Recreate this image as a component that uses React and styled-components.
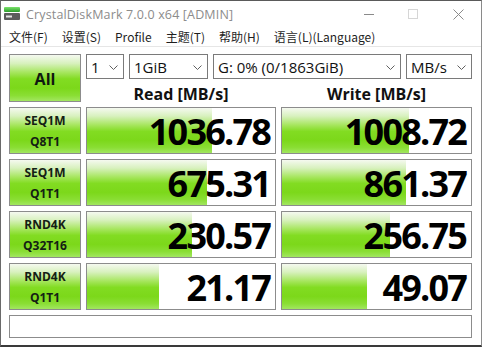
import React from 'react'
import styled, { createGlobalStyle } from 'styled-components'

// CrystalDiskMark main window

const GlobalStyle = createGlobalStyle`
    html, body {
        margin: 0;
        padding: 0;
        background: #3a3a3a;
    }
    * {
        box-sizing: border-box;
    }
`

const menuItems = ['文件(F)', '设置(S)', 'Profile', '主题(T)', '帮助(H)', '语言(L)(Language)']

const results = [
    { top: 'SEQ1M', bottom: 'Q8T1', read: '1036.78', readBar: 125, write: '1008.72', writeBar: 127 },
    { top: 'SEQ1M', bottom: 'Q1T1', read: '675.31', readBar: 120, write: '861.37', writeBar: 124 },
    { top: 'RND4K', bottom: 'Q32T16', read: '230.57', readBar: 105, write: '256.75', writeBar: 108 },
    { top: 'RND4K', bottom: 'Q1T1', read: '21.17', readBar: 72, write: '49.07', writeBar: 85 },
]

function Chevron() {
    return (
        <svg width="9" height="5" viewBox="0 0 9 5">
            <polyline points="0.5,0.5 4.5,4.5 8.5,0.5" fill="none" stroke="#606060" strokeWidth="1" />
        </svg>
    )
}

function AppIcon() {
    return (
        <IconBox width="16" height="13" viewBox="0 0 16 13">
            <defs>
                <linearGradient id="ig" x1="0" y1="0" x2="0" y2="1">
                    <stop offset="0" stopColor="#7be36b" />
                    <stop offset="1" stopColor="#2c9c2c" />
                </linearGradient>
            </defs>
            <rect x="0" y="0" width="16" height="5" rx="1" fill="url(#ig)" />
            <rect x="0" y="6" width="16" height="7" rx="1" fill="#5c5c5c" />
            <rect x="2" y="8.5" width="6" height="2" fill="#e6e6e6" />
        </IconBox>
    )
}

function Select({ width, children }) {
    return (
        <SelectBox $width={width}>
            <span>{children}</span>
            <Chevron />
        </SelectBox>
    )
}

function App() {
    return (
        <>
            <GlobalStyle />
            <Window>
                <TitleBar>
                    <AppIcon />
                    <Title>CrystalDiskMark 7.0.0 x64 [ADMIN]</Title>
                    <Controls>
                        <Minimize />
                        <Maximize />
                        <Close>
                            <svg width="11" height="11" viewBox="0 0 11 11">
                                <path d="M0.5 0.5 L10.5 10.5 M10.5 0.5 L0.5 10.5" stroke="#8a8a8a" strokeWidth="1" />
                            </svg>
                        </Close>
                    </Controls>
                </TitleBar>
                <MenuBar>
                    {menuItems.map(item => <MenuItem key={item}>{item}</MenuItem>)}
                </MenuBar>
                <Body>
                    <AllButton>All</AllButton>
                    <Selects>
                        <Select width={38}>1</Select>
                        <Select width={79}>1GiB</Select>
                        <Select width={188}>G: 0% (0/1863GiB)</Select>
                        <Select width={66}>MB/s</Select>
                    </Selects>
                    <Header>Read [MB/s]</Header>
                    <Header>Write [MB/s]</Header>
                    {results.map(r => (
                        <React.Fragment key={r.top + r.bottom}>
                            <TestLabel>
                                <span>{r.top}</span>
                                <span>{r.bottom}</span>
                            </TestLabel>
                            <ValueCell>
                                <Bar style={{ width: r.readBar }} />
                                <Value>{r.read}</Value>
                            </ValueCell>
                            <ValueCell>
                                <Bar style={{ width: r.writeBar }} />
                                <Value>{r.write}</Value>
                            </ValueCell>
                        </React.Fragment>
                    ))}
                    <Comment />
                </Body>
            </Window>
        </>
    )
}

export default App

const greenGradient = `linear-gradient(to bottom,
    #f5f9f0 0%,
    #d8f1be 18%,
    #a6e65e 38%,
    #82dc22 52%,
    #7cd81a 72%,
    #8ade34 88%,
    #a2e660 100%)`

const Window = styled.div`
    width: 482px;
    height: 347px;
    background: #ffffff;
    border-top: 1px solid #5a5a5a;
    border-left: 1px solid #6a6a6a;
    border-right: 1px solid #8a8a8a;
    border-bottom: 2px solid #3a3a3a;
    display: flex;
    flex-direction: column;
    font-family: "Open Sans", "Noto Sans", "Noto Sans CJK SC", sans-serif;
`

const TitleBar = styled.div`
    height: 26px;
    display: flex;
    align-items: center;
    padding-left: 3px;
`

const IconBox = styled.svg`
    flex: none;
    margin-top: -1px;
`

const Title = styled.div`
    margin-left: 6px;
    font-size: 12.5px;
    color: #8c8c8c;
    flex: 1;
    font-family: "Open Sans", "Noto Sans", sans-serif;
    letter-spacing: 0.15px;
`

const Controls = styled.div`
    display: flex;
    align-items: center;
    height: 100%;
`

const Minimize = styled.div`
    width: 10px;
    height: 1px;
    background: #8a8a8a;
    margin-right: 34px;
`

const Maximize = styled.div`
    width: 10px;
    height: 10px;
    border: 1px solid #d6d6d6;
    margin-right: 35px;
`

const Close = styled.div`
    width: 11px;
    height: 11px;
    margin-right: 17px;
    display: flex;
`

const MenuBar = styled.div`
    height: 19px;
    display: flex;
    align-items: center;
    padding-left: 1px;
    border-bottom: 1px solid #e6e6e6;
    box-sizing: content-box;
`

const MenuItem = styled.div`
    padding: 0 7px;
    font-size: 12px;
    line-height: 19px;
    color: #1e1e1e;
    font-family: "Noto Sans CJK SC", "Noto Sans", sans-serif;
`

const Body = styled.div`
    flex: 1;
    display: grid;
    grid-template-columns: 72px 190px 191px;
    grid-template-rows: 25px 18px repeat(4, 47px) 23px;
    gap: 5px;
    padding: 7px 9px 7px 8px;
`

const AllButton = styled.div`
    grid-row: span 2;
    border: 1px solid #8c8c8c;
    background: ${greenGradient};
    display: flex;
    align-items: center;
    justify-content: center;
    font-size: 16px;
    font-weight: 700;
    color: #101810;
    padding-top: 2px;
`

const Selects = styled.div`
    grid-column: span 2;
    display: flex;
    gap: 5px;
`

const SelectBox = styled.div`
    width: ${p => p.$width}px;
    height: 25px;
    border: 1px solid #7a7a7a;
    background: #fff;
    display: flex;
    align-items: center;
    justify-content: space-between;
    padding: 0 5px 0 4px;
    font-size: 15px;
    color: #111;
    span {
        white-space: nowrap;
    }
    svg {
        flex: none;
        margin-top: 1px;
    }
`

const Header = styled.div`
    display: flex;
    align-items: center;
    justify-content: center;
    font-size: 16px;
    font-weight: 700;
    color: #111;
    padding-top: 1px;
`

const TestLabel = styled.div`
    border: 1px solid #8c8c8c;
    background: ${greenGradient};
    display: flex;
    flex-direction: column;
    align-items: center;
    justify-content: center;
    font-size: 12px;
    font-weight: 700;
    line-height: 21px;
    color: #142014;
`

const ValueCell = styled.div`
    position: relative;
    border: 1px solid #8c8c8c;
    background: #fff;
    display: flex;
    align-items: center;
    justify-content: flex-end;
    padding: 2px 5px 0 0;
`

const Bar = styled.div`
    position: absolute;
    left: 0;
    top: 0;
    bottom: 0;
    background: ${greenGradient};
`

const Value = styled.div`
    position: relative;
    font-size: 36px;
    font-weight: 700;
    letter-spacing: -1.8px;
    line-height: 42px;
    color: #000;
`

const Comment = styled.div`
    grid-column: span 3;
    border: 1px solid #8c8c8c;
    background: #fff;
`
